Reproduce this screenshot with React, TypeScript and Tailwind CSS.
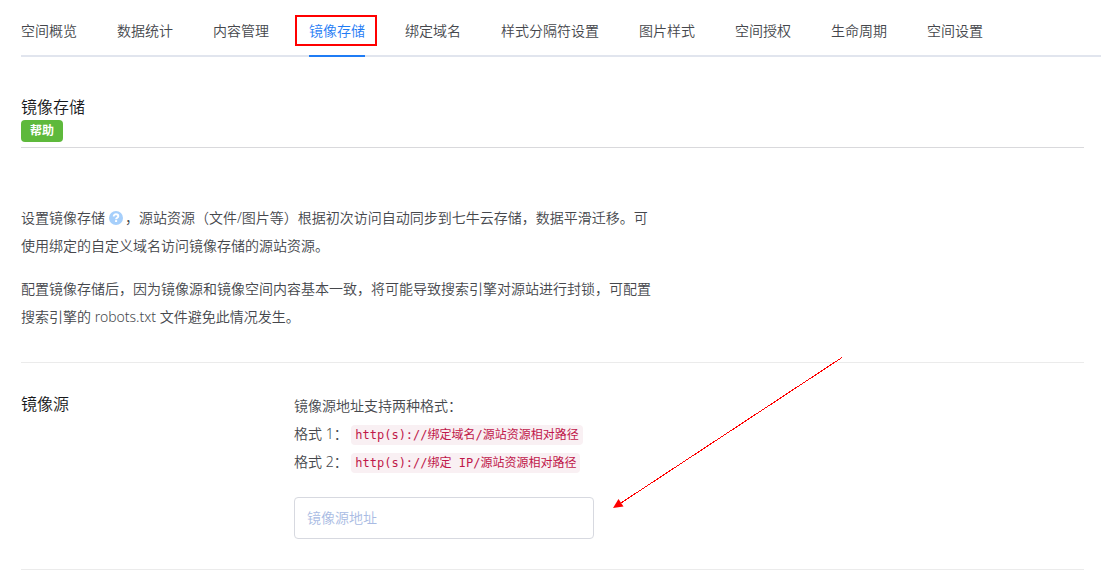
import type { ReactNode } from "react";

const tabs = [
  "空间概览",
  "数据统计",
  "内容管理",
  "镜像存储",
  "绑定域名",
  "样式分隔符设置",
  "图片样式",
  "空间授权",
  "生命周期",
  "空间设置",
];

const activeTab = "镜像存储";

function HelpIcon() {
  return (
    <svg viewBox="0 0 14 14" className="ml-1 mr-0.5 inline-block size-3.5 align-[-2px]" role="img" aria-label="帮助">
      <circle cx="7" cy="7" r="7" fill="#a6cffb" />
      <path
        d="M4.7 5.5C4.7 4 5.6 3.3 7 3.3s2.3.7 2.3 1.9c0 1.6-2.2 1.4-2.2 3"
        fill="none"
        stroke="#fff"
        strokeWidth="1.9"
      />
      <rect x="6.1" y="9.1" width="2" height="1.9" fill="#fff" />
    </svg>
  );
}

function Tabs() {
  return (
    <nav className="mr-3.5 ml-[21px] flex gap-10 border-b-2 border-[#e1e5ee] pt-[21px]">
      {tabs.map((tab) => {
        const active = tab === activeTab;
        return (
          <a
            key={tab}
            href="#"
            aria-current={active ? "page" : undefined}
            className={
              active
                ? "relative -mb-0.5 border-b-2 border-[#1f7cf5] pb-3.5 whitespace-nowrap text-[#1f7cf5]"
                : "relative -mb-0.5 border-b-2 border-transparent pb-3.5 whitespace-nowrap"
            }
          >
            {tab}
            {active && <span className="absolute -inset-x-3.5 -top-1.5 h-[31px] w-[82px] border-2 border-[#ff0000]" />}
          </a>
        );
      })}
    </nav>
  );
}

function Format({ label, children }: { label: string; children: ReactNode }) {
  return (
    <p>
      {label}{" "}
      <code className="rounded bg-[#f9f0f3] px-1 py-[3px] font-['DejaVu_Sans_Mono','Noto_Sans_CJK_SC',monospace] text-xs leading-none font-normal text-[#c0174a]">
        {children}
      </code>
    </p>
  );
}

function Arrow() {
  return (
    <svg
      viewBox="0 0 230 152"
      className="pointer-events-none absolute bottom-[60px] left-[592px] h-[152px] w-[230px]"
      aria-hidden="true"
    >
      <line x1="229" y1="0.5" x2="8" y2="146" stroke="#ff0000" strokeWidth="1" shapeRendering="crispEdges" />
      <path d="M0 151 L5.5 142 L10.5 149.5 Z" fill="#ff0000" />
    </svg>
  );
}

export default function App() {
  return (
    <div className="min-h-screen bg-white font-['Noto_Sans','Noto_Sans_CJK_SC',sans-serif] text-sm font-[350] text-[#45474c]">
      <Tabs />
      <main className="mr-[31px] ml-[21px] pt-[38px]">
        <header className="flex flex-col items-start border-b border-[#d9d9dc] pb-[5px]">
          <h1 className="text-base text-[#17181a]">镜像存储</h1>
          <button
            type="button"
            className="mt-px h-[22px] rounded bg-[#5eb93c] px-[9px] text-xs leading-5 font-bold text-white"
          >
            帮助
          </button>
        </header>

        <section className="border-b border-[#ebebeb] pt-14 pb-[31px]">
          <div className="w-3/5 space-y-[15px] leading-7">
            <p>
              设置镜像存储
              <HelpIcon />
              ，源站资源（文件/图片等）根据初次访问自动同步到七牛云存储，数据平滑迁移。可使用绑定的自定义域名访问镜像存储的源站资源。
            </p>
            <p>
              配置镜像存储后，因为镜像源和镜像空间内容基本一致，将可能导致搜索引擎对源站进行封锁，可配置搜索引擎的
              robots.txt 文件避免此情况发生。
            </p>
          </div>
        </section>

        <section className="relative flex border-b border-[#ebebeb] pt-[29px] pb-[30px]">
          <label htmlFor="source" className="w-[273px] shrink-0 text-base text-[#17181a]">
            镜像源
          </label>
          <div className="leading-7">
            <p>镜像源地址支持两种格式：</p>
            <Format label="格式 1：">http(s)://绑定域名/源站资源相对路径</Format>
            <Format label="格式 2：">http(s)://绑定 IP/源站资源相对路径</Format>
            <input
              id="source"
              type="text"
              placeholder="镜像源地址"
              className="mt-[21px] block h-[42px] w-[300px] rounded border border-[#d7d9e0] px-3 pb-0.5 placeholder:text-[#a9bbe3]"
            />
          </div>
          <Arrow />
        </section>
      </main>
    </div>
  );
}
